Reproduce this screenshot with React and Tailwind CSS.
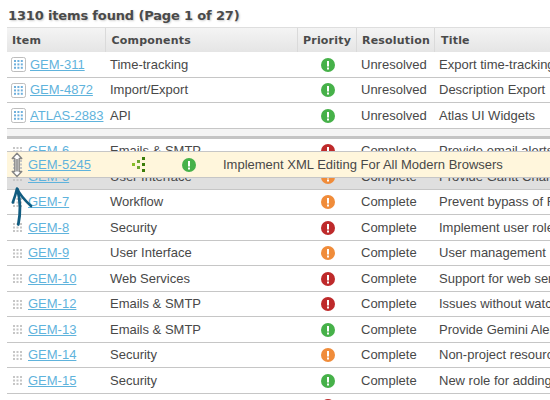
const COLORS = { green: '#46b149', red: '#be2a2b', orange: '#f08c3a' };

const TOP_ROWS = [
  { h: 'h-[26px]', id: 'GEM-311', comp: 'Time-tracking', color: 'green', res: 'Unresolved', title: 'Export time-tracking data', boxed: true },
  { h: 'h-[25px]', id: 'GEM-4872', comp: 'Import/Export', color: 'green', res: 'Unresolved', title: 'Description Export', boxed: true },
  { h: 'h-[26px]', id: 'ATLAS-2883', comp: 'API', color: 'green', res: 'Unresolved', title: 'Atlas UI Widgets', boxed: true },
];

const ROWS = [
  { h: 'h-[25px]', id: 'GEM-6', comp: 'Emails & SMTP', color: 'red', title: 'Provide email alerts' },
  { h: 'h-[26px]', id: 'GEM-5', comp: 'User Interface', color: 'orange', title: 'Provide Gantt Charts', shaded: true },
  { h: 'h-[25px]', id: 'GEM-7', comp: 'Workflow', color: 'orange', title: 'Prevent bypass of Rules' },
  { h: 'h-[26px]', id: 'GEM-8', comp: 'Security', color: 'red', title: 'Implement user roles' },
  { h: 'h-[25px]', id: 'GEM-9', comp: 'User Interface', color: 'orange', title: 'User management' },
  { h: 'h-[26px]', id: 'GEM-10', comp: 'Web Services', color: 'red', title: 'Support for web services' },
  { h: 'h-[25px]', id: 'GEM-12', comp: 'Emails & SMTP', color: 'red', title: 'Issues without watchers' },
  { h: 'h-[26px]', id: 'GEM-13', comp: 'Emails & SMTP', color: 'green', title: 'Provide Gemini Alerts' },
  { h: 'h-[25px]', id: 'GEM-14', comp: 'Security', color: 'orange', title: 'Non-project resources' },
  { h: 'h-[26px]', id: 'GEM-15', comp: 'Security', color: 'green', title: 'New role for adding' },
  { h: 'h-[25px]', id: '', comp: '', color: 'red', title: '' },
];

function Priority({ color }) {
  return (
    <svg width="14" height="14" viewBox="0 0 14 14" className="block shrink-0">
      <circle cx="7" cy="7" r="7" fill={COLORS[color]} />
      <path d="M6 3h2v5.500H6zM6 9.500h2v2H6z" fill="#fff" />
    </svg>
  );
}

function Grip({ boxed }) {
  const steps = [0, 1, 2];
  if (boxed) {
    return (
      <svg width="15" height="15" viewBox="0 0 15 15" className="block shrink-0">
        <rect x="0.5" y="0.5" width="14" height="14" rx="1.8" fill="#fff" stroke="#bdbdbd" />
        {steps.map((r) => steps.map((c) => (
          <rect key={`${r}${c}`} x={3 + c * 3.4} y={3 + r * 3.4} width="2" height="2" fill="#6fb0dc" />
        )))}
      </svg>
    );
  }
  return (
    <svg width="9" height="9" viewBox="0 0 9 9" className="block shrink-0">
      {steps.map((r) => steps.map((c) => (
        <rect key={`${r}${c}`} x={c * 3.5} y={r * 3.5} width="2" height="2" fill="#c6c6c6" />
      )))}
    </svg>
  );
}

function ItemLink({ children }) {
  return (
    <a className="text-[#5fb3dc] underline decoration-1 underline-offset-[1px] [text-decoration-skip-ink:none]">{children}</a>
  );
}

function Row({ row }) {
  return (
    <div className={`${row.h} ${row.shaded ? 'bg-[#dfdfdf]' : 'bg-white'} flex shrink-0 items-center border-b border-[#c6c6c6] whitespace-nowrap`}>
      <div className={`${row.boxed ? 'gap-1 pl-1' : 'gap-[6px] pl-[6px]'} flex w-[103px] shrink-0 items-center`}>
        {(row.boxed || row.id) && <Grip boxed={row.boxed} />}
        {row.id && <ItemLink>{row.id}</ItemLink>}
      </div>
      <div className="w-[211px] shrink-0">{row.comp}</div>
      <div className="w-10 shrink-0"><Priority color={row.color} /></div>
      <div className="w-[78px] shrink-0">{row.id && (row.res || 'Complete')}</div>
      <div>{row.title}</div>
    </div>
  );
}

function TreeIcon() {
  return (
    <svg width="14" height="15" viewBox="0 0 14 15" className="block shrink-0">
      <path d="M0 6h3v3H0z" fill="#86bc25" />
      <path d="M5 3h3v3H5zM5 9h3v3H5z" fill="#6da52f" />
      <path d="M10 0h3v3h-3zM10 6h3v3h-3zM10 12h3v3h-3z" fill="#3b7d0a" />
    </svg>
  );
}

export default function App() {
  return (
    <div className="relative flex h-[400px] w-[550px] flex-col overflow-hidden bg-white pl-[7px] font-['Liberation_Sans',Arial,sans-serif] text-[13px] text-[#484848]">
      <h1 className="h-[27px] shrink-0 pt-[7px] pl-[1px] font-['DejaVu_Sans',Verdana,sans-serif] text-[13px] leading-[17px] font-bold tracking-[-0.15px] whitespace-nowrap text-[#4a4a4a] [text-shadow:1px_1px_2px_#ccc]">
        1310 items found (Page 1 of 27)
      </h1>
      <div className="flex h-[25px] shrink-0 items-stretch border-t border-[#dedede] bg-linear-to-b from-[#f4f4f4] to-[#e5e5e5] font-['DejaVu_Sans',Verdana,sans-serif] text-[11px] leading-[25px] font-bold tracking-[0.2px] text-[#4a4a4a]">
        <div className="w-[98px] shrink-0 pl-[5px]">Item</div>
        <div className="w-[192px] shrink-0 border-l border-[#dadada] pl-[5.500px]">Components</div>
        <div className="w-[59px] shrink-0 border-l border-[#dadada] pl-[5px]">Priority</div>
        <div className="w-[78px] shrink-0 border-l border-[#dadada] pl-[5px]">Resolution</div>
        <div className="grow border-l border-[#dadada] pl-[6px]">Title</div>
      </div>
      {TOP_ROWS.map((row) => <Row key={row.id} row={row} />)}
      <div className="h-[10px] shrink-0 border-b-[3px] border-[#c4c4c4] bg-[#f4f4f4]" />
      {ROWS.map((row, i) => <Row key={i} row={row} />)}

      {/* Row being dragged over the list */}
      <div className="absolute top-[151px] left-[7px] flex h-[27px] w-[543px] items-center border-y border-[#c6c6c6] bg-[#fff6dc] whitespace-nowrap">
        <div className="flex w-[125px] shrink-0 items-center gap-[6px] pl-[6px]">
          <Grip />
          <ItemLink>GEM-5245</ItemLink>
        </div>
        <div className="w-[50px] shrink-0"><TreeIcon /></div>
        <div className="w-[34px] shrink-0"><Priority color="green" /></div>
        <div className="pl-[7px]">Implement XML Editing For All Modern Browsers</div>
      </div>

      {/* Resize pointer and hand-drawn arrow */}
      <svg width="36" height="80" viewBox="0 0 36 80" className="absolute top-[150px] left-0">
        <path d="M17 3.200l4.800 5.300h-2.600v13h2.600L17 26.500l-4.800-5h2.600v-13h-2.600z" fill="#fff" stroke="#858585" strokeWidth="1.300" strokeLinejoin="round" />
        <path d="M15.500 9h3v12.500h-3z" fill="#a3a3a3" />
        <g fill="none" stroke="#115c80" strokeLinecap="round" strokeLinejoin="round">
          <path d="M18.300 74.500C20 66 20.800 52 17.500 39.500" strokeWidth="2.800" />
          <path d="M12.800 52.500C14.500 48 16 43 17 38.500C20 45 25 50.500 31 56" strokeWidth="2.600" />
        </g>
      </svg>
    </div>
  );
}
